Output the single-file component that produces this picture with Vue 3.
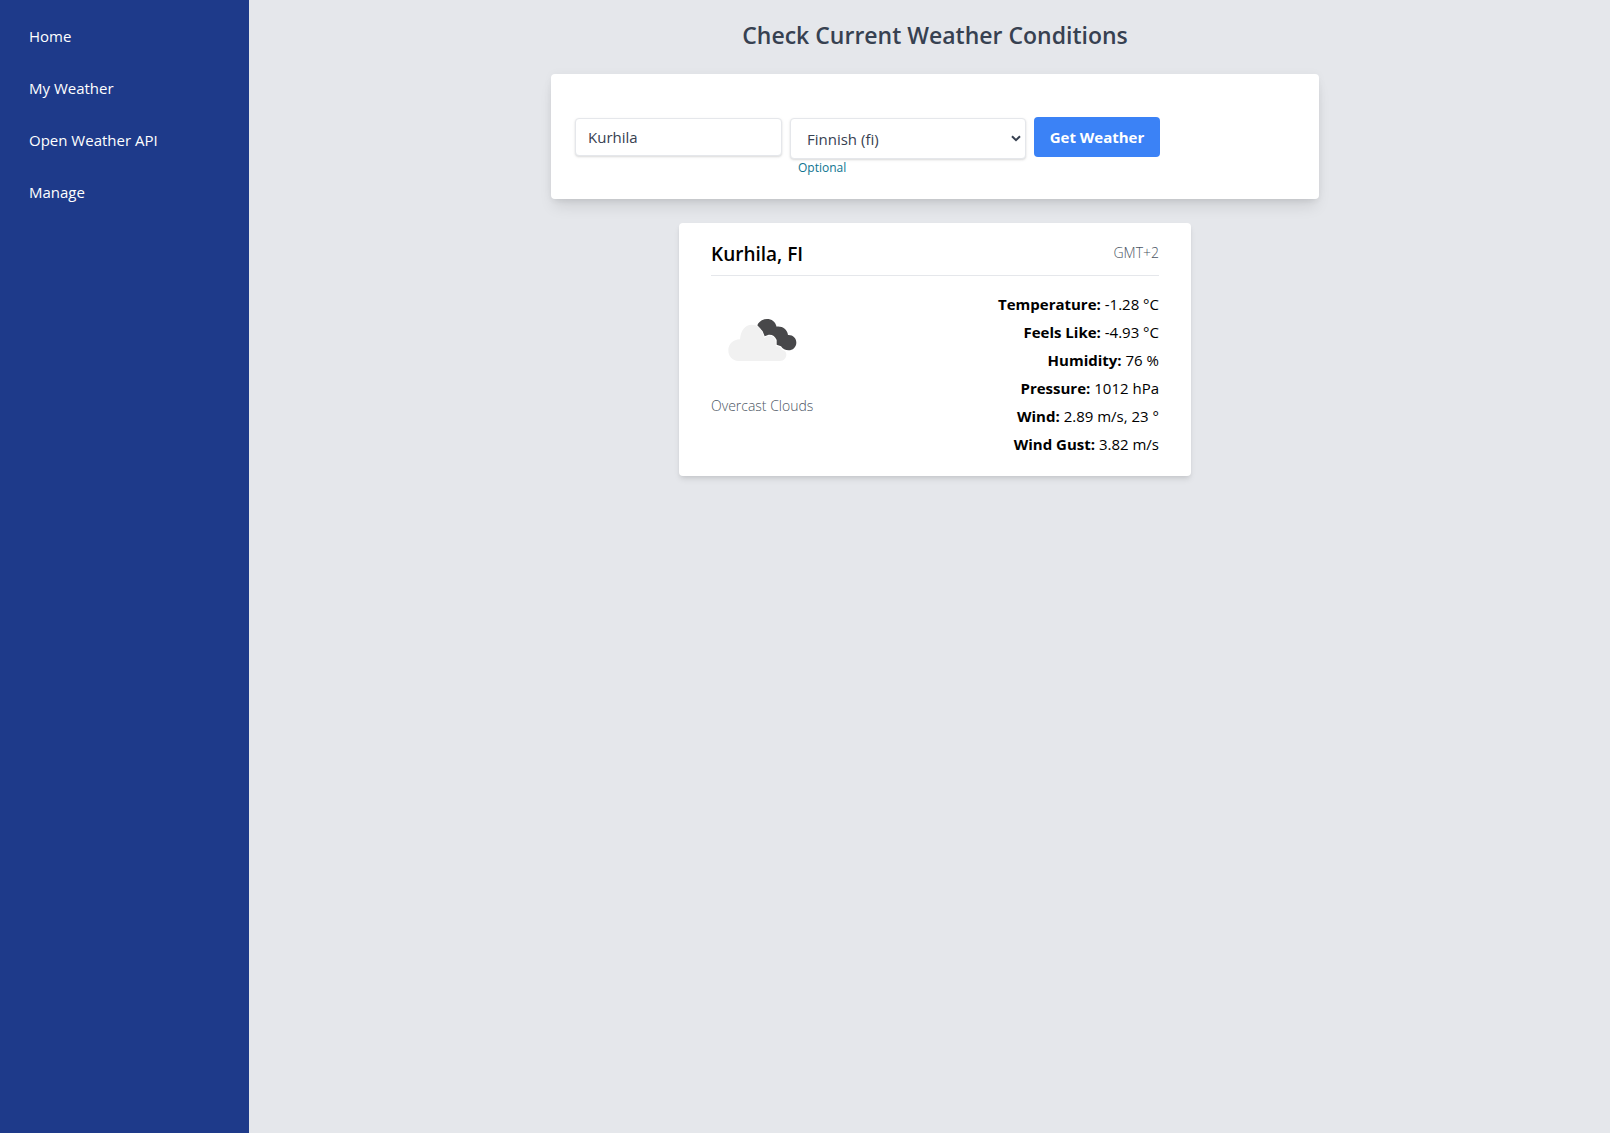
<script setup>
import { ref } from 'vue'

const links = ['Home', 'My Weather', 'Open Weather API', 'Manage']
const city = ref('Kurhila')
const language = ref('fi')
const languages = [
  { code: 'en', name: 'English' },
  { code: 'fi', name: 'Finnish' },
  { code: 'sv', name: 'Swedish' },
]
const stats = [
  { label: 'Temperature', value: '-1.28 °C' },
  { label: 'Feels Like', value: '-4.93 °C' },
  { label: 'Humidity', value: '76 %' },
  { label: 'Pressure', value: '1012 hPa' },
  { label: 'Wind', value: '2.89 m/s, 23 °' },
  { label: 'Wind Gust', value: '3.82 m/s' },
]
</script>

<template>
  <div class="layout">
    <nav class="sidebar">
      <a v-for="link in links" :key="link" href="#" class="nav-link">{{ link }}</a>
    </nav>
    <main class="main">
      <h1 class="title">Check Current Weather Conditions</h1>

      <form class="search" @submit.prevent>
        <input v-model="city" class="field city" type="text" aria-label="City" />
        <div class="language">
          <div class="select-wrap">
            <select id="language" v-model="language" class="field select">
              <option v-for="l in languages" :key="l.code" :value="l.code">{{ l.name }} ({{ l.code }})</option>
            </select>
            <svg class="chevron" viewBox="0 0 10 7" aria-hidden="true"><path d="M1 1.2 5 5.2 9 1.2" /></svg>
          </div>
          <label for="language" class="hint">Optional</label>
        </div>
        <button type="submit" class="submit">Get Weather</button>
      </form>

      <section class="card">
        <header class="card-head">
          <h2 class="place">Kurhila, FI</h2>
          <span class="zone">GMT+2</span>
        </header>
        <div class="card-body">
          <div class="summary">
            <svg class="cloud" viewBox="-27 -60 300 300" role="img" aria-label="Overcast clouds">
              <path fill="#48484a" d="M112 46C116 34 128 27 141 27C155 27 166 35 170 50C187 48 202 58 204 75C218 74 229 84 229 98C229 111 218 121 206 121C196 121 188 117 183 109L170 104V90C165 78 157 73 146 74L134 79L128 64Z" />
              <path fill="#f1f1f1" d="M55 153C37 153 25 139 25 121C25 102 39 89 60 88C62 61 76 44 95 44C112 44 124 54 129 73L133 85C137 80 143 77 150 77C161 78 167 86 167 98C168 103 168 107 167 109C176 107 182 112 186 119C195 121 199 127 199 133C199 145 192 153 180 153Z" />
            </svg>
            <p class="description">Overcast Clouds</p>
          </div>
          <ul class="stats">
            <li v-for="s in stats" :key="s.label"><strong>{{ s.label }}:</strong> {{ s.value }}</li>
          </ul>
        </div>
      </section>
    </main>
  </div>
</template>

<style>
body {
  background: #e5e7eb;
}
</style>

<style scoped>
.layout {
  display: flex;
  min-height: 100vh;
  font-family: "Segoe UI", "Open Sans", "Noto Sans", sans-serif;
  font-size: 15px;
  line-height: 24px;
  color: #000;
}
.layout * {
  box-sizing: border-box;
}
.sidebar {
  flex: 0 0 249px;
  padding: 10px 16px;
  background: #1e3a8a;
}
.nav-link {
  display: block;
  padding: 14px 13px;
  color: #fff;
  text-decoration: none;
}
.main {
  flex: 1;
  min-width: 0;
  display: flex;
  flex-direction: column;
  align-items: center;
  padding: 19px 0 24px 11px;
}
.title {
  margin: 0 0 23px;
  font-size: 23px;
  line-height: 32px;
  font-weight: 600;
  color: #374151;
}
.search {
  display: flex;
  align-items: flex-start;
  gap: 8px;
  width: 100%;
  max-width: 768px;
  margin-bottom: 24px;
  padding: 43px 24px 23px;
  background: #fff;
  border-radius: 4px;
  box-shadow: 0 10px 15px -3px rgba(0, 0, 0, 0.1), 0 4px 6px -2px rgba(0, 0, 0, 0.05), 0 0 10px rgba(0, 0, 0, 0.04);
}
.field {
  border: 1px solid #e5e7eb;
  border-radius: 4px;
  background: #fff;
  box-shadow: 0 1px 3px rgba(0, 0, 0, 0.1), 0 1px 2px rgba(0, 0, 0, 0.06);
  font: inherit;
  color: #374151;
}
.city {
  width: 207px;
  height: 38px;
  margin-top: 1px;
  padding: 0 12px;
}
.language {
  width: 236px;
  margin-top: 1px;
}
.select-wrap {
  position: relative;
}
.select {
  display: block;
  width: 100%;
  height: 41px;
  padding: 1px 16px 0;
  appearance: none;
}
.chevron {
  position: absolute;
  top: 17px;
  right: 5px;
  width: 10px;
  height: 7px;
  fill: none;
  stroke: #374151;
  stroke-width: 2;
  pointer-events: none;
}
.hint {
  display: block;
  padding: 1px 8px 0;
  font-size: 12px;
  line-height: 16px;
  color: #0e7490;
}
.submit {
  width: 126px;
  height: 40px;
  padding: 0;
  border: 0;
  border-radius: 4px;
  background: #3b82f6;
  font: inherit;
  font-weight: 700;
  color: #fff;
}
.card {
  width: 100%;
  max-width: 512px;
  padding: 16px 32px;
  background: #fff;
  border-radius: 4px;
  box-shadow: 0 4px 6px -1px rgba(0, 0, 0, 0.1), 0 2px 4px -1px rgba(0, 0, 0, 0.06);
}
.card-head {
  display: flex;
  justify-content: space-between;
  padding-bottom: 7px;
  border-bottom: 1px solid #e5e7eb;
}
.place {
  margin: 1px 0 0;
  font-size: 19px;
  line-height: 28px;
  font-weight: 600;
}
.zone,
.description {
  font-size: 14px;
  font-weight: 300;
  color: #4b5563;
}
.zone {
  line-height: 28px;
}
.card-body {
  display: flex;
  justify-content: space-between;
  padding: 14px 0 2px;
}
.cloud {
  display: block;
  width: 100px;
  height: 100px;
}
.description {
  margin: 4px 0 0;
}
.stats {
  margin: 0;
  padding: 0;
  list-style: none;
  line-height: 28px;
  text-align: right;
}
.stats strong {
  font-weight: 700;
}
</style>
